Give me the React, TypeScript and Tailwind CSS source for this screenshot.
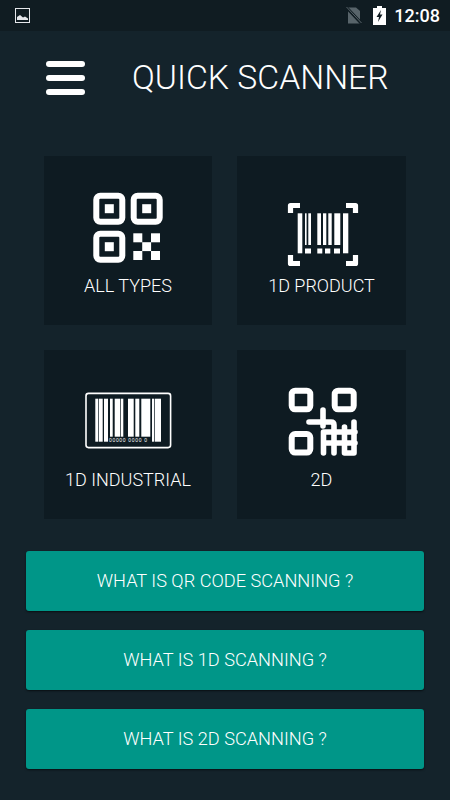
function Finder({ x, y }: { x: number; y: number }) {
  return (
    <g>
      <rect x={x + 3} y={y + 3} width="26" height="26" rx="4" fill="none" stroke="#fff" strokeWidth="6" />
      <rect x={x + 11.5} y={y + 11.5} width="9" height="9" fill="#fff" />
    </g>
  );
}

function AllTypesIcon() {
  return (
    <svg width="168" height="118" viewBox="0 0 168 118">
      <Finder x={49.3} y={36.7} />
      <Finder x={86.7} y={36.7} />
      <Finder x={49.3} y={74.7} />
      <g fill="#fff">
        <rect x="89.3" y="77.3" width="9" height="9" />
        <rect x="107" y="77.3" width="9" height="9" />
        <rect x="98.2" y="86.2" width="8.9" height="8.9" />
        <rect x="89.3" y="95" width="9" height="9" />
        <rect x="107" y="95" width="9" height="9" />
      </g>
    </svg>
  );
}

function ProductIcon() {
  const tall = [
    [59.7, 4.6],
    [105, 5.3],
  ];
  const short = [
    [67, 1.6],
    [70.3, 2.7],
    [79.3, 3.7],
    [85, 3.3],
    [90.3, 3.4],
    [96.3, 6],
  ];
  const dots = [
    [67, 6],
    [79.3, 5],
    [87, 5.3],
    [96, 6],
  ];
  return (
    <svg width="168" height="118" viewBox="0 0 168 118">
      <g fill="none" stroke="#fff" strokeWidth="5.2" strokeLinejoin="round">
        <path d="M52.5 57V49.5H62" />
        <path d="M108 49.5H117.5V57" />
        <path d="M52.5 99V107.5H62" />
        <path d="M108 107.5H117.5V99" />
      </g>
      <g fill="#fff">
        {tall.map(([x, w]) => (
          <rect key={x} x={x} y="57.3" width={w} height="40" />
        ))}
        {short.map(([x, w]) => (
          <rect key={x} x={x} y="57.3" width={w} height="31.7" />
        ))}
        {dots.map(([x, w]) => (
          <rect key={x} x={x} y="92.5" width={w} height="5" />
        ))}
      </g>
    </svg>
  );
}

function IndustrialIcon() {
  const bars = [
    [51.3, 2.7, 43],
    [54.7, 4, 43],
    [60, 4, 43],
    [66, 2.7, 38],
    [70.7, 5.6, 38],
    [77, 2.3, 38],
    [84, 5.7, 38],
    [91.3, 4, 38],
    [97.3, 9, 38],
    [108, 2, 43],
    [110.7, 6.3, 43],
  ];
  return (
    <svg width="168" height="118" viewBox="0 0 168 118">
      <rect x="42" y="43.4" width="84.6" height="54.2" rx="2.5" fill="none" stroke="#fff" strokeWidth="1.6" />
      <g fill="#fff">
        {bars.map(([x, w, h]) => (
          <rect key={x} x={x} y="48.7" width={w} height={h} />
        ))}
      </g>
      <text
        x="65"
        y="91.5"
        fill="#fff"
        fontSize="5"
        fontFamily="'Liberation Sans', sans-serif"
        textLength="38"
        lengthAdjust="spacing"
      >
        00000 0000 0
      </text>
    </svg>
  );
}

function TwoDIcon() {
  return (
    <svg width="168" height="118" viewBox="0 0 168 118">
      <g fill="none" stroke="#fff" strokeWidth="6">
        <rect x="53.7" y="40.7" width="18.6" height="18.6" rx="3.5" />
        <rect x="96.7" y="40.7" width="19" height="18.6" rx="3.5" />
        <rect x="53.7" y="84" width="18.6" height="18.6" rx="3.5" />
      </g>
      <path
        d="M71 72H93Q96 72 96 75V103M85 60V76M87 82H117M87 93H117M85.5 82V103M116 72V103H106.5V77"
        fill="none"
        stroke="#fff"
        strokeWidth="5.6"
        strokeLinecap="round"
        strokeLinejoin="round"
      />
    </svg>
  );
}

const tiles = [
  { label: "ALL TYPES", icon: <AllTypesIcon /> },
  { label: "1D PRODUCT", icon: <ProductIcon /> },
  { label: "1D INDUSTRIAL", icon: <IndustrialIcon /> },
  { label: "2D", icon: <TwoDIcon /> },
];

const questions = ["WHAT IS QR CODE SCANNING ?", "WHAT IS 1D SCANNING ?", "WHAT IS 2D SCANNING ?"];

export default function App() {
  return (
    <div className="w-[450px] h-[800px] bg-[#14232b] overflow-hidden flex flex-col font-['Roboto',sans-serif]">
      <div className="h-[31px] bg-[#101c22] flex items-center pl-[15px] pr-[10px]">
        <svg width="15" height="15" viewBox="0 0 15 15">
          <rect x="0.5" y="0.5" width="14" height="14" fill="none" stroke="#e5e7eb" />
          <path d="M2 12V9L5 7L8 9.5L10 8.5L13 10.5V12Z" fill="#e5e7eb" />
        </svg>
        <svg className="ml-auto" width="16" height="17" viewBox="0 0 16 17">
          <path d="M2 0.5H10L14 4V16.5H2Z" fill="#58646a" />
          <path d="M0.5 0.5L15.5 16.5" stroke="#101c22" strokeWidth="3" />
          <path d="M0.5 0L15.5 16" stroke="#58646a" strokeWidth="1" />
        </svg>
        <svg className="ml-[11px]" width="13" height="19" viewBox="0 0 13 19">
          <path d="M4 0H9V2H13V19H0V2H4Z" fill="#fff" />
          <path d="M8 4L3.5 11H6L5 16L9.5 8.5H7Z" fill="#101c22" />
        </svg>
        <span className="ml-[8px] text-[18px] font-medium text-white">12:08</span>
      </div>

      <div className="flex items-center pl-[46px] pt-[27px]">
        <div className="w-[39px] flex flex-col gap-[8px]">
          <div className="h-[6px] rounded-full bg-white" />
          <div className="h-[6px] rounded-full bg-white" />
          <div className="h-[6px] rounded-full bg-white" />
        </div>
        <h1 className="ml-[47px] text-[33.7px] leading-[40px] font-light text-white">QUICK SCANNER</h1>
      </div>

      <div className="mt-[58px] ml-[44px] w-[362px] grid grid-cols-[168px_169px] gap-x-[25px] gap-y-[25px]">
        {tiles.map((tile) => (
          <div key={tile.label} className="h-[169px] bg-[#0e1b22] flex flex-col items-center">
            {tile.icon}
            <span className="mt-[2px] text-[18px] leading-[20px] font-light text-white">{tile.label}</span>
          </div>
        ))}
      </div>

      <div className="mt-[32px] px-[26px] flex flex-col gap-[19px]">
        {questions.map((q) => (
          <button
            key={q}
            className="h-[60px] rounded-[3px] bg-[#009688] text-[18.2px] font-light text-white shadow-[0_1px_2px_rgba(0,0,0,0.6)]"
          >
            {q}
          </button>
        ))}
      </div>
    </div>
  );
}
